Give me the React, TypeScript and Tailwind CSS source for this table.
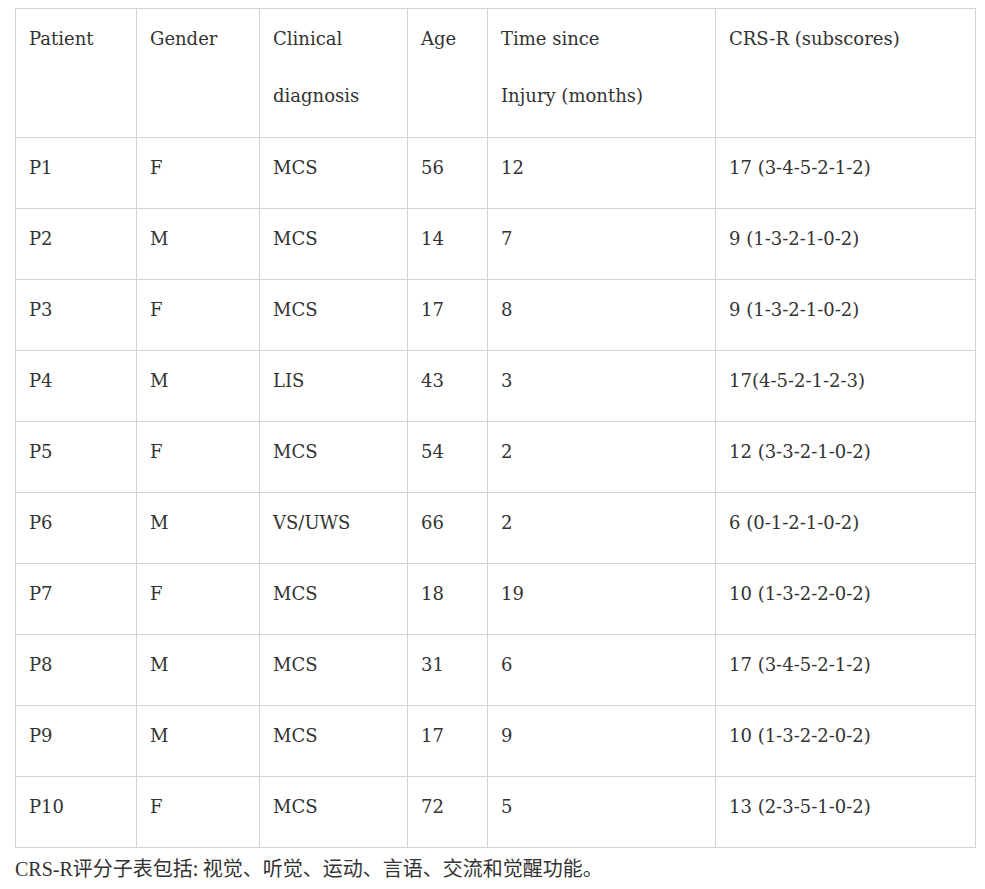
import React from "react";

const headers = [
  ["Patient"],
  ["Gender"],
  ["Clinical", "diagnosis"],
  ["Age"],
  ["Time since", "Injury (months)"],
  ["CRS-R (subscores)"],
];

const rows = [
  ["P1", "F", "MCS", "56", "12", "17 (3-4-5-2-1-2)"],
  ["P2", "M", "MCS", "14", "7", "9 (1-3-2-1-0-2)"],
  ["P3", "F", "MCS", "17", "8", "9 (1-3-2-1-0-2)"],
  ["P4", "M", "LIS", "43", "3", "17(4-5-2-1-2-3)"],
  ["P5", "F", "MCS", "54", "2", "12 (3-3-2-1-0-2)"],
  ["P6", "M", "VS/UWS", "66", "2", "6 (0-1-2-1-0-2)"],
  ["P7", "F", "MCS", "18", "19", "10 (1-3-2-2-0-2)"],
  ["P8", "M", "MCS", "31", "6", "17 (3-4-5-2-1-2)"],
  ["P9", "M", "MCS", "17", "9", "10 (1-3-2-2-0-2)"],
  ["P10", "F", "MCS", "72", "5", "13 (2-3-5-1-0-2)"],
];

export default function App() {
  return (
    <div className="min-h-screen bg-white px-[15px] pt-2 text-[#333] font-['DejaVu_Serif','Noto_Sans_CJK_SC',serif]">
      <table className="w-[960px] table-fixed border-collapse text-[18px] leading-[57px]">
        <colgroup>
          <col className="w-[121px]" />
          <col className="w-[123px]" />
          <col className="w-[148px]" />
          <col className="w-[80px]" />
          <col className="w-[228px]" />
          <col className="w-[260px]" />
        </colgroup>
        <thead>
          <tr>
            {headers.map((h, i) => (
              <th key={i} className="border border-[#d3d3d3] px-[13px] pt-[1px] pb-[13px] text-left align-top font-normal">
                {h.map((line, j) => (
                  <div key={j}>{line}</div>
                ))}
              </th>
            ))}
          </tr>
        </thead>
        <tbody>
          {rows.map((r, i) => (
            <tr key={i}>
              {r.map((c, j) => (
                <td key={j} className="border border-[#d3d3d3] px-[13px] pt-[1px] pb-[12px] align-top">
                  {c}
                </td>
              ))}
            </tr>
          ))}
        </tbody>
      </table>
      <p className="mt-[6px] text-[20px] leading-[28px] font-['Liberation_Serif','Noto_Sans_CJK_SC',serif]">
        CRS-R<span className="font-['Noto_Sans_CJK_SC',sans-serif]">评分子表包括: 视觉、听觉、运动、言语、交流和觉醒功能。</span>
      </p>
    </div>
  );
}
